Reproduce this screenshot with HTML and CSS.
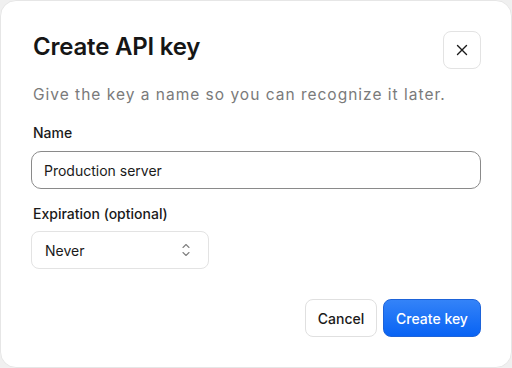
FILE: index.html
```
<!DOCTYPE html>
<html>
<head>
<meta charset="utf-8">
<link rel="stylesheet" href="styles.css">
</head>
<body>
<div class="dialog">
  <div class="header">
    <h1 class="title">Create API key</h1>
    <button class="close" aria-label="Close">
      <svg width="12" height="12" viewBox="0 0 12 12"><path d="M1.5 1.5 L10.5 10.5 M10.5 1.5 L1.5 10.5" stroke="#1a1a1a" stroke-width="1.4" stroke-linecap="round" fill="none"/></svg>
    </button>
  </div>
  <p class="subtitle">Give the key a name so you can recognize it later.</p>
  <label class="label">Name</label>
  <div class="input">Production server</div>
  <label class="label label-exp">Expiration (optional)</label>
  <div class="select">
    <span>Never</span>
    <svg width="8" height="14" viewBox="0 0 8 14"><path d="M1 4.5 L4 1.5 L7 4.5 M1 9.5 L4 12.5 L7 9.5" stroke="#808080" stroke-width="1.1" stroke-linecap="round" stroke-linejoin="round" fill="none"/></svg>
  </div>
  <div class="actions">
    <button class="btn btn-cancel">Cancel</button>
    <button class="btn btn-primary">Create key</button>
  </div>
</div>
</body>
</html>
```
FILE: styles.css
```
* { box-sizing: border-box; }
html, body { margin: 0; padding: 0; }
body {
  background: #f0f0f0;
  font-family: Inter, "Noto Sans", sans-serif;
  color: #1a1a1a;
  width: 512px;
  height: 368px;
}
.dialog {
  width: 512px;
  height: 368px;
  background: #fff;
  border: 1px solid #e6e6e6;
  border-radius: 16px;
  padding: 30px 30px 0 30px;
  display: flex;
  flex-direction: column;
}
.header {
  display: flex;
  justify-content: space-between;
  align-items: flex-start;
  height: 38px;
}
.title {
  margin: 0 0 0 2px;
  font-size: 24px;
  line-height: 32px;
  font-weight: 600;
  letter-spacing: -0.2px;
  color: #161616;
}
.close {
  width: 38px;
  height: 38px;
  border: 1px solid #e3e3e3;
  border-radius: 8px;
  background: #fff;
  display: flex;
  align-items: center;
  justify-content: center;
  padding: 0;
}
.subtitle {
  margin: 15px 0 0 2px;
  font-size: 15.5px;
  line-height: 22px;
  letter-spacing: 1px;
  color: #7a7a7a;
}
.label {
  display: block;
  margin: 17px 0 0 2px;
  font-size: 14px;
  line-height: 20px;
  font-weight: 500;
  color: #1a1a1a;
}
.label-exp { margin-top: 15px; }
.input {
  margin-top: 8px;
  height: 38px;
  border: 1.5px solid #8a8a8a;
  border-radius: 10px;
  padding: 0 12px;
  display: flex;
  align-items: center;
  font-size: 14px;
  color: #1a1a1a;
}
.select {
  margin-top: 7px;
  width: 178px;
  height: 38px;
  border: 1px solid #e3e3e3;
  border-radius: 8px;
  padding: 0 18px 0 13px;
  display: flex;
  align-items: center;
  justify-content: space-between;
  font-size: 14px;
  color: #1a1a1a;
}
.actions {
  margin-top: 30px;
  display: flex;
  justify-content: flex-end;
  gap: 6px;
}
.btn {
  height: 38px;
  border-radius: 8px;
  font-family: Inter, "Noto Sans", sans-serif;
  font-size: 14px;
  font-weight: 500;
  padding: 0;
  white-space: nowrap;
}
.btn-cancel {
  width: 72px;
  background: #fff;
  border: 1px solid #e0e0e0;
  color: #1a1a1a;
}
.btn-primary {
  width: 98px;
  background: linear-gradient(#3483f8, #0863f4);
  border: 1px solid #1d63d9;
  color: #fff;
}
```
